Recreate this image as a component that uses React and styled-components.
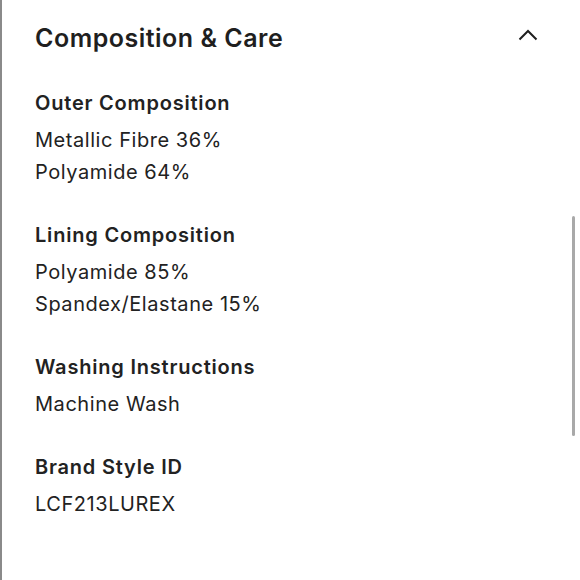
import React from "react";
import styled, { createGlobalStyle } from "styled-components";

const GlobalStyle = createGlobalStyle`
  html, body {
    margin: 0;
    padding: 0;
    background: #fff;
  }
  body {
    font-family: Inter, "Liberation Sans", sans-serif;
    color: #222;
  }
`;

const Page = styled.div`
  position: relative;
  width: 580px;
  height: 580px;
  box-sizing: border-box;
  border-left: 2px solid #8a8a8a;
  overflow: hidden;
`;

const Panel = styled.section`
  padding: 20px 40px 0 33px;
`;

const Header = styled.div`
  display: flex;
  align-items: center;
  justify-content: space-between;
  height: 36px;
  margin-bottom: 31px;
`;

const Title = styled.h2`
  margin: 0;
  font-size: 25px;
  font-weight: 600;
  letter-spacing: 0.5px;
  color: #1f1f1f;
`;

const Toggle = styled.button`
  display: flex;
  align-items: center;
  justify-content: center;
  border: 0;
  padding: 0;
  background: none;
  width: 24px;
  height: 24px;
  margin-bottom: 7px;
  color: #1f1f1f;
`;

const Group = styled.div`
  margin-bottom: 31px;
`;

const Label = styled.h3`
  margin: 0 0 5px;
  font-size: 20px;
  line-height: 32px;
  font-weight: 600;
  letter-spacing: 0.8px;
  color: #222;
`;

const Value = styled.p`
  margin: 0;
  font-size: 20px;
  line-height: 32px;
  font-weight: 400;
  letter-spacing: 0.55px;
  color: #222;
`;

const Scrollbar = styled.div`
  position: absolute;
  right: 5px;
  top: 216px;
  width: 3px;
  height: 220px;
  border-radius: 2px;
  background: #a9a9a9;
`;

const details = [
  { label: "Outer Composition", values: ["Metallic Fibre 36%", "Polyamide 64%"] },
  { label: "Lining Composition", values: ["Polyamide 85%", "Spandex/Elastane 15%"] },
  { label: "Washing Instructions", values: ["Machine Wash"] },
  { label: "Brand Style ID", values: ["LCF213LUREX"] },
];

export default function App() {
  return (
    <>
      <GlobalStyle />
      <Page>
        <Panel>
          <Header>
            <Title>Composition &amp; Care</Title>
            <Toggle aria-label="collapse">
              <svg width="20" height="12" viewBox="0 0 20 12" fill="none">
                <path d="M1.5 10.5 L10 2 L18.5 10.5" stroke="currentColor" strokeWidth="2" />
              </svg>
            </Toggle>
          </Header>
          {details.map((d) => (
            <Group key={d.label}>
              <Label>{d.label}</Label>
              {d.values.map((v) => (
                <Value key={v}>{v}</Value>
              ))}
            </Group>
          ))}
        </Panel>
        <Scrollbar />
      </Page>
    </>
  );
}
